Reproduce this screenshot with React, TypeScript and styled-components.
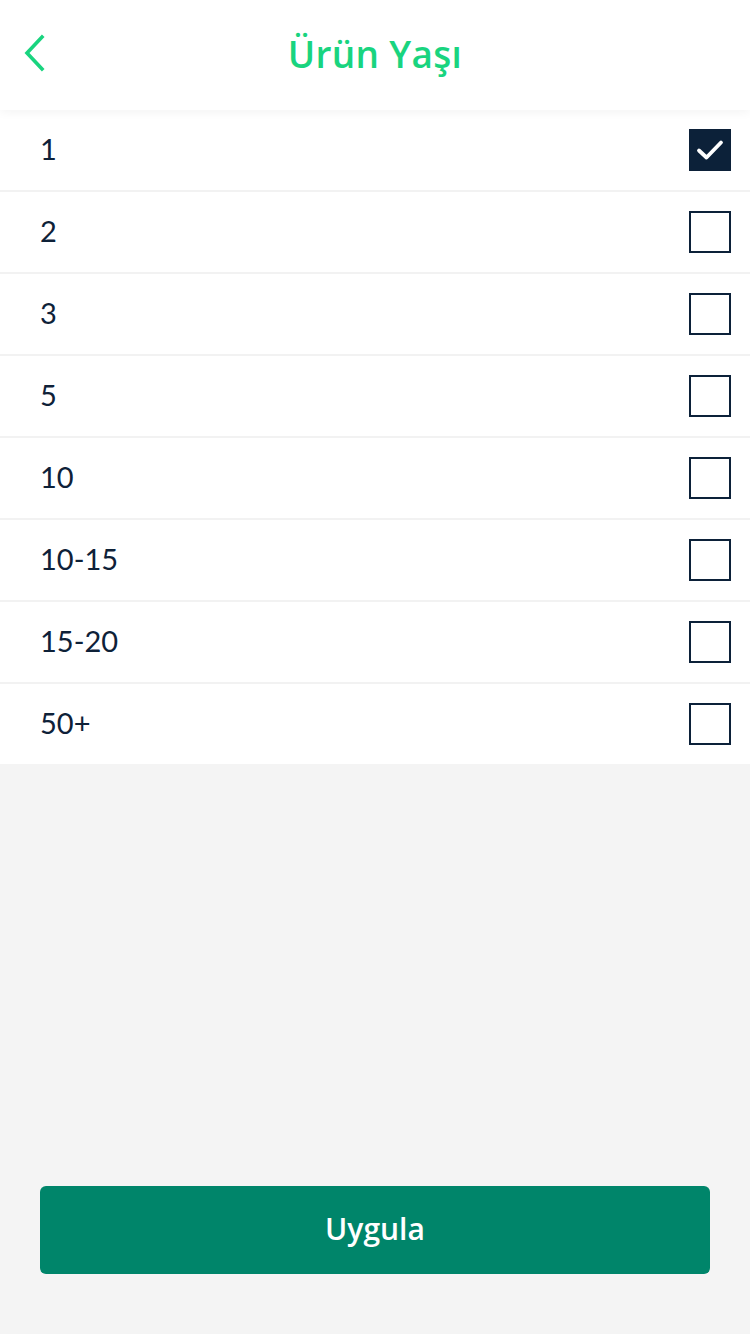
import React, { useState } from "react";
import styled, { createGlobalStyle } from "styled-components";

const Global = createGlobalStyle`
  html, body { margin: 0; padding: 0; background: #f4f4f4; }
  body { font-family: "Lato", "Open Sans", "Liberation Sans", sans-serif; }
  #root { min-height: 1334px; }
`;

const Page = styled.div`
  width: 750px;
  height: 1334px;
  display: flex;
  flex-direction: column;
  background: #f4f4f4;
`;

const Header = styled.header`
  height: 110px;
  box-sizing: border-box;
  padding-bottom: 4px;
  background: #fff;
  display: grid;
  grid-template-columns: 110px 1fr 110px;
  align-items: center;
  position: relative;
  z-index: 1;
  box-shadow: 0 2px 10px rgba(0, 0, 0, 0.05);
`;

const BackButton = styled.button`
  border: 0;
  background: none;
  padding: 0 0 0 22px;
  display: flex;
  align-items: center;
  height: 40px;
  cursor: pointer;
`;

const Title = styled.h1`
  margin: 0;
  text-align: center;
  color: #19d47f;
  font-family: "Open Sans", "Lato", sans-serif;
  font-size: 37px;
  font-weight: 600;
  letter-spacing: 0.3px;
`;

const List = styled.ul`
  list-style: none;
  margin: 0;
  padding: 0;
  background: #fff;
`;

const Row = styled.li<{ $last?: boolean }>`
  height: 80px;
  display: flex;
  align-items: center;
  justify-content: space-between;
  padding: 0 19px 0 40px;
  border-bottom: ${(p) => (p.$last ? "0" : "2px solid #f2f2f2")};
  cursor: pointer;
`;

const Label = styled.span`
  font-size: 29px;
  color: #0e2138;
  font-weight: 400;
  padding-bottom: 4px;
`;

const Box = styled.span<{ $checked: boolean }>`
  width: 42px;
  height: 42px;
  box-sizing: border-box;
  border: 2px solid #0c2139;
  background: ${(p) => (p.$checked ? "#0c2139" : "#fff")};
  display: flex;
  align-items: center;
  justify-content: center;
`;

const Spacer = styled.div`
  flex: 1;
`;

const Footer = styled.div`
  padding: 0 40px 60px;
`;

const ApplyButton = styled.button`
  width: 100%;
  height: 88px;
  border: 0;
  border-radius: 6px;
  background: #00856a;
  color: #fff;
  font-family: "Open Sans", "Lato", "Liberation Sans", sans-serif;
  font-size: 30px;
  font-weight: 600;
  padding-bottom: 4px;
  cursor: pointer;
`;

const options = ["1", "2", "3", "5", "10", "10-15", "15-20", "50+"];

export default function App() {
  const [selected, setSelected] = useState<string[]>(["1"]);
  const toggle = (v: string) =>
    setSelected((s) => (s.includes(v) ? s.filter((x) => x !== v) : [...s, v]));

  return (
    <Page>
      <Global />
      <Header>
        <BackButton aria-label="Geri">
          <svg width="24" height="38" viewBox="0 0 24 38" fill="none">
            <path d="M20 3 L5 19 L20 35" stroke="#19d47f" strokeWidth="3.6" strokeLinecap="square" strokeLinejoin="miter" />
          </svg>
        </BackButton>
        <Title>Ürün Yaşı</Title>
        <div />
      </Header>
      <List>
        {options.map((o, i) => {
          const checked = selected.includes(o);
          return (
            <Row key={o} $last={i === options.length - 1} onClick={() => toggle(o)}>
              <Label>{o}</Label>
              <Box $checked={checked}>
                {checked && (
                  <svg width="28" height="22" viewBox="0 0 28 22" fill="none">
                    <path d="M3 11.5 L10.5 18.5 L25 3.5" stroke="#fff" strokeWidth="3.8" strokeLinecap="round" strokeLinejoin="round" />
                  </svg>
                )}
              </Box>
            </Row>
          );
        })}
      </List>
      <Spacer />
      <Footer>
        <ApplyButton>Uygula</ApplyButton>
      </Footer>
    </Page>
  );
}
